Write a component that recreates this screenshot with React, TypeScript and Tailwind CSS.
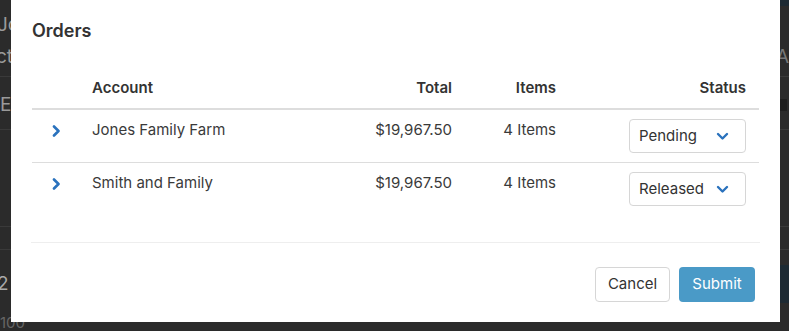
import React, { useState } from 'react';

type Order = {
  account: string;
  total: string;
  items: string;
  status: string;
};

const orders: Order[] = [
  { account: 'Jones Family Farm', total: '$19,967.50', items: '4 Items', status: 'Pending' },
  { account: 'Smith and Family', total: '$19,967.50', items: '4 Items', status: 'Released' },
];

function ChevronRight() {
  return (
    <svg width="9" height="12" viewBox="0 0 9 12" fill="none">
      <path d="M2 1.5 L6.5 6 L2 10.5" stroke="#2a72bd" strokeWidth="2.6" strokeLinecap="round" strokeLinejoin="round" />
    </svg>
  );
}

function ChevronDown() {
  return (
    <svg width="13" height="9" viewBox="0 0 13 9" fill="none">
      <path d="M2 2 L6.5 6.5 L11 2" stroke="#2a72bd" strokeWidth="2.4" strokeLinecap="round" strokeLinejoin="round" />
    </svg>
  );
}

function Backdrop() {
  // the app behind the modal, only slivers of it show
  return (
    <div className="flex h-full w-full flex-col bg-[#2b2b2b] text-[19px] text-[#9a9a9a]">
      <div className="flex h-[77px] flex-col border-b border-[#3a3a3a] pt-[9px] leading-[32px]">
        <div className="flex justify-between">
          <span className="-ml-[3px]">Jo</span>
          <span className="-mt-[9px] h-[6px] w-[10px] bg-[#1d2a33]" />
        </div>
        <div className="flex justify-between">
          <span className="-ml-[4px]">ct</span>
          <span className="text-[#777]">A</span>
        </div>
      </div>
      <div className="flex h-[54px] items-center justify-between border-b border-[#3a3a3a] pt-[4px]">
        <span>E</span>
        <span className="mr-[2px] h-[12px] w-[7px] bg-[#1e1e1e]" />
      </div>
      <div className="h-[97px] border-b border-[#3a3a3a]" />
      <div className="h-[24px] border-b border-[#3a3a3a]" />
      <div className="flex h-[64px] items-center justify-between pt-[4px]">
        <span className="-ml-[3px] text-[#aaa]">2</span>
        <span className="h-[38px] w-[10px] bg-[#1d2a33]" />
      </div>
      <div className="flex-1 text-[15px] leading-[17px] text-[#666]">100</div>
    </div>
  );
}

export default function App() {
  const [statuses, setStatuses] = useState(orders.map((o) => o.status));

  return (
    <div
      className="relative h-[331px] w-[789px] overflow-hidden"
      style={{ fontFamily: 'Inter, "Open Sans", sans-serif' }}
    >
      <Backdrop />

      <div className="absolute left-[11px] top-0 flex h-[322px] w-[769px] flex-col bg-white text-[#333]">
        <h2 className="px-[21px] pt-[19px] text-[18px] font-semibold leading-[24px] text-[#333]">Orders</h2>

        <div className="mx-[21px] mt-[28px]">
          <div className="grid h-[39px] grid-cols-[60px_240px_120px_104px_190px_13px] border-b-2 border-[#dddddd] text-[15px] font-semibold leading-[20px]">
            <div />
            <div className="pt-[7px]">Account</div>
            <div className="pt-[7px] text-right">Total</div>
            <div className="pt-[7px] text-right">Items</div>
            <div className="pt-[7px] text-right">Status</div>
            <div />
          </div>

          {orders.map((o, i) => (
            <div
              key={o.account}
              className={`grid h-[53px] grid-cols-[60px_240px_120px_104px_190px_13px] text-[15px] leading-[20px] text-[#3a3a3a] ${
                i < orders.length - 1 ? 'border-b border-[#dddddd]' : ''
              }`}
            >
              <div className="flex pl-[20px] pt-[15px]">
                <ChevronRight />
              </div>
              <div className="pt-[10px]">{o.account}</div>
              <div className="pt-[10px] text-right">{o.total}</div>
              <div className="pt-[10px] text-right">{o.items}</div>
              <div className="flex justify-end pt-[9px]">
                <button
                  className="flex h-[34px] w-[117px] items-center justify-between rounded-[4px] border border-[#d6d6d6] bg-white pl-[9px] pr-[16px] text-[15px] text-[#333]"
                  onClick={() =>
                    setStatuses((s) => s.map((v, j) => (j === i ? (v === 'Pending' ? 'Released' : 'Pending') : v)))
                  }
                >
                  <span>{statuses[i]}</span>
                  <ChevronDown />
                </button>
              </div>
              <div />
            </div>
          ))}
        </div>

        <div className="mx-[20px] mt-[26px] border-t border-[#eeeeee]" />

        <div className="flex justify-end gap-[9px] pr-[25px] pt-[24px]">
          <button className="h-[35px] w-[75px] rounded-[4px] border border-[#d6d6d6] bg-white text-[15px] text-[#333]">
            Cancel
          </button>
          <button className="h-[35px] w-[76px] rounded-[4px] bg-[#4a9ac7] text-[15px] text-white">Submit</button>
        </div>
      </div>
    </div>
  );
}
